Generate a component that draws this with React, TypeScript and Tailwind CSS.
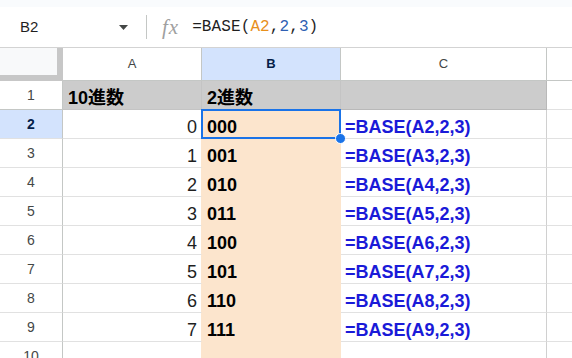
import React from 'react';

const rows = [
  { a: '0', b: '000', c: '=BASE(A2,2,3)' },
  { a: '1', b: '001', c: '=BASE(A3,2,3)' },
  { a: '2', b: '010', c: '=BASE(A4,2,3)' },
  { a: '3', b: '011', c: '=BASE(A5,2,3)' },
  { a: '4', b: '100', c: '=BASE(A6,2,3)' },
  { a: '5', b: '101', c: '=BASE(A7,2,3)' },
  { a: '6', b: '110', c: '=BASE(A8,2,3)' },
  { a: '7', b: '111', c: '=BASE(A9,2,3)' },
  { a: '', b: '', c: '' },
];

const cellFont = "font-['Liberation_Sans','Noto_Sans_CJK_JP',sans-serif] text-[18px] leading-[20px]";

export default function App() {
  return (
    <div className="w-[572px] h-[358px] overflow-hidden bg-white font-['Liberation_Sans',Arial,sans-serif]">
      <div className="h-[7px] bg-[#f9fbfd]" />

      {/* formula bar */}
      <div className="h-[41px] flex items-center border-b border-[#d3d3d3]">
        <div className="w-[146px] flex items-center justify-between pl-[20px] pr-[18px]">
          <span className="text-[15px] text-[#1f1f1f]">B2</span>
          <svg width="9" height="5" viewBox="0 0 9 5">
            <path d="M0 0h9L4.5 5z" fill="#444746" />
          </svg>
        </div>
        <div className="w-px h-[24px] bg-[#c4c7c5]" />
        <span className="ml-[15px] font-['Liberation_Serif',serif] italic text-[21px] leading-none tracking-[1px] text-[#a0a0a0]">
          fx
        </span>
        <span className="ml-[13px] font-['Liberation_Mono',monospace] text-[16px] tracking-[0.1px] text-[#1f1f1f]">
          =BASE(<span className="text-[#e8901c]">A2</span>,<span className="text-[#2f5fb3]">2</span>,
          <span className="text-[#2f5fb3]">3</span>)
        </span>
      </div>

      {/* sheet */}
      <div className="grid grid-cols-[63px_139px_139px_206px_1fr] auto-rows-[29px] grid-rows-[33px]">
        {/* header row */}
        <div className="bg-[#f8f9fa] border-r-[6px] border-b-[6px] border-[#c7c7c7]" />
        <div className="flex items-center justify-center border-r border-b border-[#c4c7c5] text-[13px] text-[#444746]">A</div>
        <div className="flex items-center justify-center bg-[#d3e3fd] border-r border-b border-[#c4c7c5] text-[13px] font-bold text-[#041e49]">B</div>
        <div className="flex items-center justify-center border-r border-b border-[#c4c7c5] text-[13px] text-[#444746]">C</div>
        <div className="border-b border-[#c4c7c5]" />

        {/* row 1 */}
        <div className="flex items-center justify-center border-r border-b border-[#c4c7c5] text-[14px] text-[#444746]">1</div>
        <div className={`flex items-end pb-px pl-[5px] bg-[#cccccc] border-r border-b border-[#c4c4c4] font-bold text-black ${cellFont}`}>10進数</div>
        <div className={`flex items-end pb-px pl-[5px] bg-[#cccccc] border-r border-b border-[#c4c4c4] font-bold text-black ${cellFont}`}>2進数</div>
        <div className="bg-[#cccccc] border-r border-b border-[#b9b9b9]" />
        <div className="border-b border-[#e1e1e1]" />

        {rows.map((r, i) => {
          const n = i + 2;
          const sel = n === 2;
          return (
            <React.Fragment key={n}>
              <div
                className={`flex items-center justify-center border-r border-b border-r-[#c4c7c5] border-b-[#e1e1e1] text-[14px] ${
                  sel ? 'bg-[#d3e3fd] font-bold text-[#041e49]' : 'text-[#444746]'
                }`}
              >
                {n}
              </div>
              <div className={`flex items-end justify-end pb-px pr-[4px] border-r border-b border-r-[#fce5cd] border-b-[#e1e1e1] text-[#1f1f1f] ${cellFont}`}>
                {r.a}
              </div>
              <div className={`relative flex items-end pb-px pl-[5px] bg-[#fce5cd] border-r border-b border-[#fce5cd] font-bold text-black ${cellFont} ${sel ? 'z-10' : ''}`}>
                {r.b}
                {sel && (
                  <>
                    <div className="absolute -top-px -left-px -right-px -bottom-px border-2 border-[#1a73e8]" />
                    <div className="absolute -right-[6px] -bottom-[6px] w-[11px] h-[11px] rounded-full bg-[#1a73e8] border border-white" />
                  </>
                )}
              </div>
              <div className={`flex items-end pb-px pl-[4px] border-r border-b border-r-[#d0d0d0] border-b-[#e1e1e1] font-bold text-[#1a1ad8] ${cellFont}`}>
                {r.c}
              </div>
              <div className="border-b border-[#e1e1e1]" />
            </React.Fragment>
          );
        })}
      </div>
    </div>
  );
}
